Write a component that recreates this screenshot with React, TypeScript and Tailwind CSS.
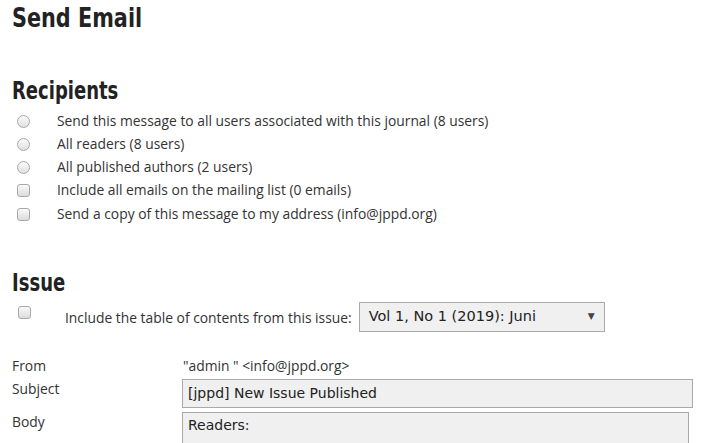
const recipients = [
  { type: "radio", label: "Send this message to all users associated with this journal (8 users)" },
  { type: "radio", label: "All readers (8 users)" },
  { type: "radio", label: "All published authors (2 users)" },
  { type: "checkbox", label: "Include all emails on the mailing list (0 emails)" },
  { type: "checkbox", label: "Send a copy of this message to my address (info@jppd.org)" },
];

function Radio() {
  return (
    <span className="inline-block w-[13px] h-[13px] rounded-full border border-[#a9a9a9] bg-gradient-to-b from-[#fafafa] to-[#e0e0e0]" />
  );
}

function Checkbox() {
  return (
    <span className="inline-block w-[13px] h-[13px] rounded-[3px] border border-[#a9a9a9] bg-gradient-to-b from-[#fafafa] to-[#dcdcdc]" />
  );
}

// condensed bold heading (no condensed face installed, so squeeze DejaVu Sans)
function Heading({ children, className }: { children: string; className: string }) {
  return (
    <div
      className={`w-max origin-left font-['DejaVu_Sans',sans-serif] font-bold text-[#222] ${className}`}
    >
      {children}
    </div>
  );
}

export default function App() {
  return (
    <div className="w-[711px] h-[443px] overflow-hidden bg-white text-[#333] font-['Open_Sans',sans-serif] text-[13.85px]">
      <div className="pl-3">
        {/* Title */}
        <Heading className="scale-x-[0.77] text-[27px] leading-[36px]">Send Email</Heading>

        {/* Recipients */}
        <Heading className="scale-x-[0.75] mt-[40px] text-[24px] leading-[30px]">Recipients</Heading>
        <div className="mt-[4px] flex flex-col">
          {recipients.map((r, i) => (
            <div key={r.label} className={`flex items-center ${i === 4 ? "h-[25px]" : "h-[23px]"}`}>
              <div className="w-[45px] pl-[5px] flex items-center">
                {r.type === "radio" ? <Radio /> : <Checkbox />}
              </div>
              <span>{r.label}</span>
            </div>
          ))}
        </div>

        {/* Issue */}
        <Heading className="scale-x-[0.75] mt-[41px] text-[24px] leading-[30px]">Issue</Heading>
        <div className="flex mt-[4px]">
          <div className="w-[53px] pl-[6px] pt-[2px]">
            <Checkbox />
          </div>
          <span className="pt-[6px] pr-[7px]">Include the table of contents from this issue:</span>
          <div className="w-[246px] h-[30px] border border-[#a9a9a9] bg-[#f0f0f0] flex items-center justify-between pl-[9px] pr-[9px] font-['DejaVu_Sans',sans-serif] text-[14.5px] text-[#222]">
            <span>Vol 1, No 1 (2019): Juni</span>
            <span className="text-[9px] text-[#444]">▼</span>
          </div>
        </div>

        {/* Email fields */}
        <div className="mt-[22px] flex flex-col">
          <div className="flex h-[25px] items-center">
            <span className="w-[170px]">From</span>
            <span className="pl-[1px]">"admin " &lt;info@jppd.org&gt;</span>
          </div>
          <div className="flex h-[29px]">
            <span className="w-[170px]">Subject</span>
            <div className="w-[511px] h-[29px] border border-[#a9a9a9] bg-[#f0f0f0] flex items-center pl-[5px] font-['DejaVu_Sans',sans-serif] text-[14px] text-[#222]">
              [jppd] New Issue Published
            </div>
          </div>
          <div className="flex mt-[4px]">
            <span className="w-[170px]">Body</span>
            <div className="w-[507px] h-[60px] border border-[#a9a9a9] bg-[#f0f0f0] pl-[5px] pt-[2px] font-['DejaVu_Sans',sans-serif] text-[14px] text-[#222]">
              Readers:
            </div>
          </div>
        </div>
      </div>
    </div>
  );
}
